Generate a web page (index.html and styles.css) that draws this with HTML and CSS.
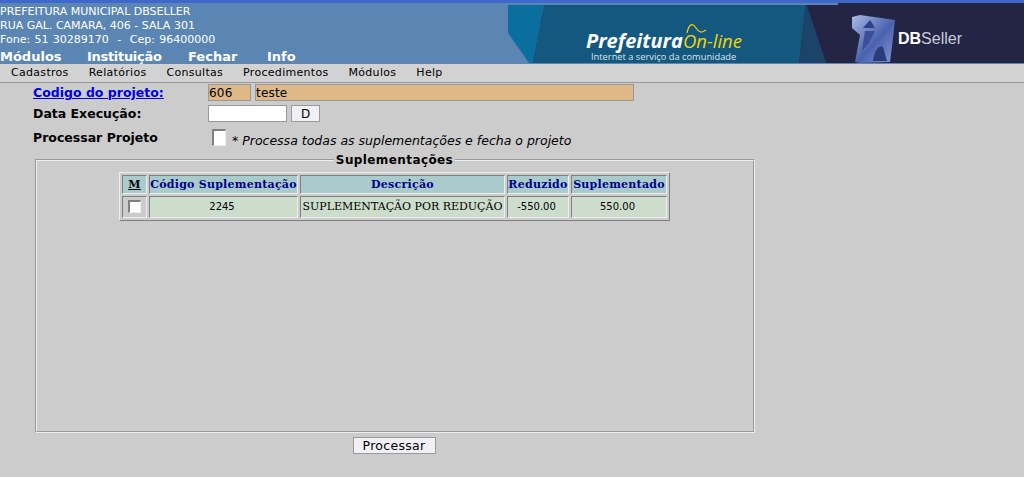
FILE: index.html
```html
<!DOCTYPE html>
<html lang="pt-BR">
<head>
    <meta charset="UTF-8">
    <title>Projetos - Suplementações</title>
    <link rel="stylesheet" href="styles.css">
</head>
<body>

    <div class="topo">
        <div class="topo-info">
            <div class="endereco">
                <div>PREFEITURA MUNICIPAL DBSELLER</div>
                <div>RUA GAL. CAMARA, 406 - SALA 301</div>
                <div class="fone">Fone: 51 30289170 &nbsp;- &nbsp;Cep: 96400000</div>
            </div>
            <div class="nav">
                <a class="nav-modulos">Módulos</a>
                <a class="nav-instituicao">Instituição</a>
                <a class="nav-fechar">Fechar</a>
                <a>Info</a>
            </div>
        </div>
        <svg class="banner" width="517" height="60" viewBox="0 0 517 60">
            <defs>
                <linearGradient id="cubo" x1="0" y1="0" x2="1" y2="1">
                    <stop offset="0" stop-color="#a9bce8"/>
                    <stop offset="0.55" stop-color="#4a62ad"/>
                    <stop offset="1" stop-color="#8798d6"/>
                </linearGradient>
                <filter id="suave">
                    <feGaussianBlur stdDeviation="0.7"/>
                </filter>
            </defs>
            <rect x="292" width="225" height="60" fill="#242544"/>
            <polygon points="1,0 37,0 25,60 22,60 1,30" fill="#0a6f9f"/>
            <polygon points="37,0 299,0 292,60 25,60" fill="#14587f"/>
            <polygon points="299,0 319,60 292,60" fill="#1c4468"/>
            <rect width="331" height="2" fill="#5b86b3"/>
            <text class="logo-prefeitura" x="79" y="45">Prefeitura</text>
            <text class="logo-online" x="176" y="45">On-line</text>
            <path d="M180 30 C182 20 186 20 189 25 C192 30 195 30 199 27" fill="none" stroke="#f0d400" stroke-width="1.2"/>
            <text class="logo-slogan" x="84" y="57">Internet a serviço da comunidade</text>
            <g filter="url(#suave)">
                <path d="M345 14 L353 12 L388 17 L386 35 L383 59 L353 60 L348 59 L353 32 L345 25 Z" fill="url(#cubo)"/>
                <path d="M356 25 L363 17 L368 25 Z" fill="#2f3f8c"/>
                <path d="M358 28 L368 28 L362 40 L355 48 Z" fill="#3a4d9c"/>
                <path d="M366 58 C367 48 372 42 376 44 L380 58 Z" fill="#2c3a78"/>
            </g>
            <text class="logo-db" x="391" y="41">DB<tspan class="logo-seller">Seller</tspan></text>
        </svg>
    </div>

    <div class="menu">
        <a>Cadastros</a>
        <a>Relatórios</a>
        <a>Consultas</a>
        <a>Procedimentos</a>
        <a>Módulos</a>
        <a>Help</a>
    </div>

    <form class="formulario">
        <div class="linha linha-codigo">
            <a class="rotulo link" href="#">Codigo do projeto:</a>
            <input class="campo campo-codigo" type="text" value="606" readonly>
            <input class="campo campo-nome" type="text" value="teste" readonly>
        </div>
        <div class="linha linha-data">
            <label class="rotulo">Data Execução:</label>
            <input class="campo-data" type="text">
            <button class="botao botao-d" type="button">D</button>
        </div>
        <div class="linha linha-processar">
            <label class="rotulo">Processar Projeto</label>
            <input class="marca marca-projeto" type="checkbox">
            <em class="aviso">* Processa todas as suplementações e fecha o projeto</em>
        </div>

        <fieldset class="quadro">
            <legend>Suplementações</legend>
            <table class="tabela">
                <tr>
                    <th class="col-m"><u>M</u></th>
                    <th class="col-codigo">Código Suplementação</th>
                    <th class="col-descricao">Descrição</th>
                    <th class="col-reduzido">Reduzido</th>
                    <th class="col-suplementado">Suplementado</th>
                </tr>
                <tr>
                    <td class="celula-marca"><input class="marca" type="checkbox"></td>
                    <td class="valor">2245</td>
                    <td>SUPLEMENTAÇÃO POR REDUÇÃO</td>
                    <td class="valor">-550.00</td>
                    <td class="valor">550.00</td>
                </tr>
            </table>
        </fieldset>

        <div class="acoes">
            <button class="botao botao-processar" type="button">Processar</button>
        </div>
    </form>

</body>
</html>
```

FILE: styles.css
```css
html, body {
    height: 100%;
}

body {
    margin: 0;
    background-color: #cccccc;
    color: black;
    font-family: "DejaVu Sans", sans-serif;
    font-size: 12px;
    overflow: hidden;
}

/* topo */
.topo {
    display: flex;
    justify-content: space-between;
    height: 60px;
    padding-bottom: 1px;
    background-color: #5b86b3;
    border-top: 3px solid #3f68cc;
    color: white;
}

.topo-info {
    display: flex;
    flex-direction: column;
}

.endereco {
    font-size: 11px;
    line-height: 14px;
    padding-top: 2px;
}

.fone {
    word-spacing: 0.8px;
}

.nav {
    display: flex;
    margin-top: 2px;
    font-size: 13px;
    font-weight: bold;
    line-height: 15px;
}

.nav-modulos {
    width: 87px;
}

.nav-instituicao {
    width: 101px;
    letter-spacing: -0.3px;
}

.nav-fechar {
    width: 79px;
}

.banner {
    display: block;
}

.logo-prefeitura {
    font-family: "Open Sans", sans-serif;
    font-size: 20px;
    font-weight: bold;
    font-style: italic;
    fill: white;
}

.logo-online {
    font-family: "Open Sans", sans-serif;
    font-size: 18.5px;
    font-style: italic;
    fill: #f0d400;
}

.logo-slogan {
    font-family: "Open Sans", sans-serif;
    font-size: 9.3px;
    fill: #d8e4ee;
}

.logo-db {
    font-family: "Liberation Sans", sans-serif;
    font-size: 16px;
    font-weight: bold;
    fill: white;
}

.logo-seller {
    font-weight: normal;
    fill: #c9cbdc;
}

/* menu */
.menu {
    display: flex;
    gap: 20px;
    height: 18px;
    padding-left: 11px;
    background-color: #d2d2d2;
    border-bottom: 1px solid #999999;
    font-size: 11px;
    line-height: 18px;
    letter-spacing: 0.3px;
}

/* formulario */
.formulario {
    width: 720px;
    margin-left: 35px;
}

.linha {
    display: flex;
    align-items: flex-start;
}

.linha-codigo {
    margin-top: 1px;
}

.linha-data {
    margin-top: 4px;
}

.linha-processar {
    margin-top: 7px;
}

.rotulo {
    width: 175px;
    margin-left: -2px;
    font-size: 12.5px;
    font-weight: bold;
    line-height: 17px;
}

.link {
    color: #0000ee;
}

.campo, .campo-data {
    height: 17px;
    padding: 0 1px;
    box-sizing: border-box;
    border: 1px solid #999999;
    font-family: "DejaVu Sans", sans-serif;
    font-size: 12px;
    color: black;
}

.campo {
    padding: 0;
    background-color: #deb887;
    letter-spacing: 0.2px;
}

.campo-codigo {
    width: 43px;
    margin-right: 4px;
}

.campo-nome {
    width: 379px;
}

.campo-data {
    width: 79px;
    margin-right: 4px;
    background-color: white;
}

.botao {
    height: 17px;
    padding: 0;
    box-sizing: border-box;
    background-color: #f0f0f5;
    border: 1px solid #999999;
    font-family: "DejaVu Sans", sans-serif;
    font-size: 12px;
    color: black;
}

.botao-d {
    width: 29px;
}

.botao-processar {
    width: 83px;
    font-size: 12.5px;
    letter-spacing: 0.3px;
}

.marca {
    appearance: none;
    display: block;
    width: 13px;
    height: 13px;
    margin: 0;
    box-sizing: border-box;
    background-color: white;
    border-style: solid;
    border-width: 2px 1px 1px 2px;
    border-color: #808080 #eeeeee #eeeeee #808080;
}

.marca-projeto {
    width: 14px;
    height: 17px;
    margin-left: 4px;
}

.aviso {
    margin: 4px 0 0 6px;
    font-size: 12.5px;
    line-height: 16px;
}

.quadro {
    height: 276px;
    margin: 4px 0 0;
    padding: 0 1px 0 0;
    border: 2px groove #eeeeee;
}

.quadro legend {
    margin: 0 auto;
    padding: 0 2px;
    font-size: 12px;
    font-weight: bold;
    line-height: 14px;
    letter-spacing: 0.4px;
}

.tabela {
    margin: 5px auto 0;
    border-collapse: separate;
    border-spacing: 2px;
    border-style: solid;
    border-width: 1px;
    border-color: #eeeeee #808080 #808080 #eeeeee;
    font-family: "DejaVu Serif", serif;
    font-size: 11px;
}

.tabela th {
    height: 19px;
    padding: 0;
    box-sizing: border-box;
    background-color: #a9cbcc;
    color: #00008b;
    font-size: 11px;
    letter-spacing: 0.25px;
    border-style: solid;
    border-width: 1px;
    border-color: #808080 #eeeeee #eeeeee #808080;
}

.tabela td {
    height: 22px;
    padding: 0 0 1px;
    box-sizing: border-box;
    background-color: #ccddcc;
    text-align: center;
    border-style: solid;
    border-width: 1px;
    border-color: #808080 #eeeeee #eeeeee #808080;
}

.tabela .col-m {
    width: 25px;
    color: black;
}

.col-codigo {
    width: 149px;
}

.col-descricao {
    width: 205px;
}

.col-reduzido {
    width: 62px;
}

.col-suplementado {
    width: 96px;
}

.tabela .celula-marca {
    background-color: #cccccc;
}

.celula-marca .marca {
    margin: 0 auto;
}

.tabela .valor {
    padding-right: 3px;
    font-family: "DejaVu Sans", sans-serif;
    font-size: 10px;
}

.acoes {
    margin-top: 4px;
    padding-right: 2px;
    text-align: center;
}
```
